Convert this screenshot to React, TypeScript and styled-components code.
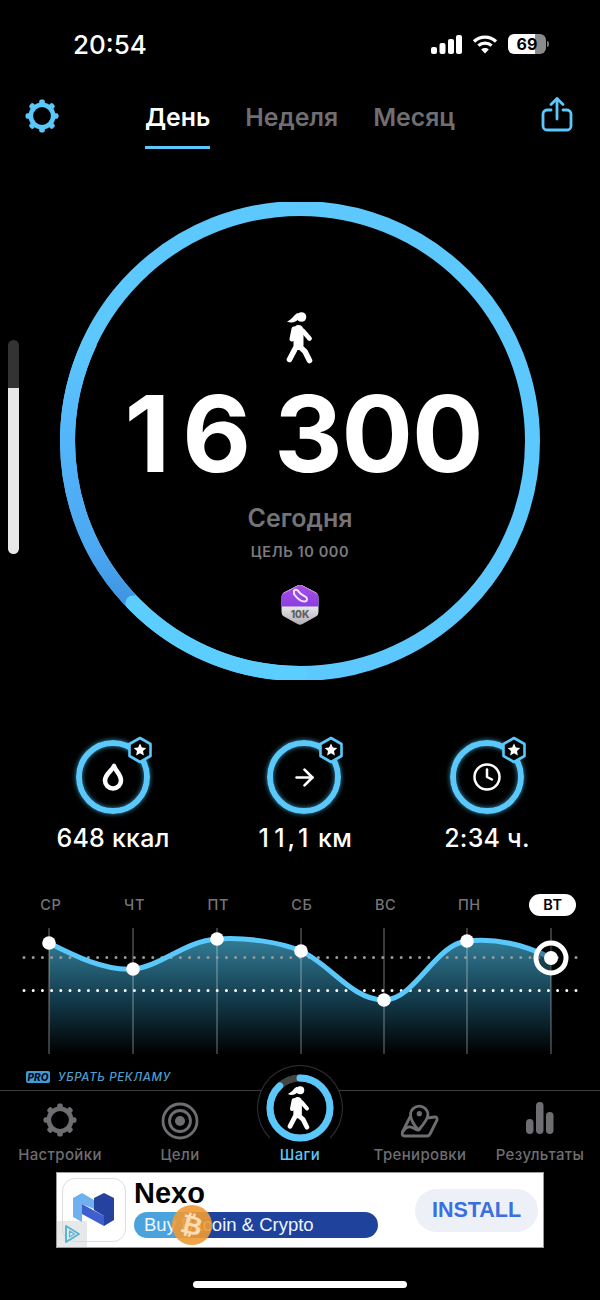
import React from "react";
import styled, { createGlobalStyle } from "styled-components";
import { ArrowRight, Clock } from "lucide-react";

const Global = createGlobalStyle`
  html, body { margin: 0; padding: 0; background: #000; }
  * { box-sizing: border-box; }
`;

const BLUE = "#5ac8fa";
const RING = "#5cc8fe";

const Page = styled.div`
  position: relative;
  width: 600px;
  height: 1300px;
  background: #000;
  overflow: hidden;
  display: flex;
  flex-direction: column;
  font-family: Inter, "Liberation Sans", sans-serif;
  color: #fff;
`;

const StatusBar = styled.div`
  height: 88px;
  padding: 0 51px 0 73px;
  display: flex;
  align-items: center;
  justify-content: space-between;
`;
const Time = styled.span`
  font-size: 26px;
  font-weight: 500;
`;
const StatusIcons = styled.div`
  display: flex;
  align-items: center;
  gap: 10px;
`;
const Battery = styled.div`
  width: 38px;
  height: 20px;
  border-radius: 6px;
  overflow: hidden;
  background: linear-gradient(90deg, #fff 0 72%, #8a8a8a 72% 100%);
  color: #000;
  font-size: 16px;
  font-weight: 700;
  line-height: 20px;
  text-align: center;
`;
const BatteryGroup = styled.div`
  display: flex;
  align-items: center;
  gap: 1px;
`;
const BatteryNub = styled.div`
  width: 2px;
  height: 6px;
  border-radius: 0 2px 2px 0;
  background: #777;
`;

const NavBar = styled.div`
  height: 62px;
  padding: 0 27px 0 24px;
  display: flex;
  align-items: flex-start;
  justify-content: space-between;
`;
const NavIcon = styled.div<{ $top: number }>`
  margin-top: ${(p) => p.$top}px;
  display: flex;
`;
const Tabs = styled.div`
  display: flex;
  gap: 35px;
  margin-left: -1px;
`;
const Tab = styled.div<{ $active?: boolean }>`
  height: 48px;
  margin-top: 13px;
  font-size: 24.8px;
  line-height: 32px;
  font-weight: 600;
  color: ${(p) => (p.$active ? "#fff" : "#6f6f72")};
  border-bottom: 3px solid ${(p) => (p.$active ? BLUE : "transparent")};
`;

const RingSection = styled.div`
  position: relative;
  align-self: center;
  width: 480px;
  height: 478px;
  margin-top: 52px;
  padding-top: 110px;
  display: flex;
  flex-direction: column;
  align-items: center;
`;
const RingArt = styled.svg`
  position: absolute;
  inset: 0;
`;
const Steps = styled.div`
  margin-top: 6px;
  padding-left: 7px;
  font-size: 106px;
  line-height: 128px;
  font-weight: 700;
  letter-spacing: -1px;
  white-space: nowrap;
`;
const BigOne = styled.span`
  margin-right: 13px;
`;
const Today = styled.div`
  margin-top: 5px;
  font-size: 25px;
  line-height: 30px;
  font-weight: 600;
  color: #747478;
`;
const Goal = styled.div`
  margin-top: 10px;
  font-size: 14.5px;
  line-height: 18px;
  font-weight: 600;
  letter-spacing: 0.6px;
  color: #7b7b7f;
`;
const BadgeWrap = styled.div`
  margin-top: 23px;
  height: 42px;
`;

const Stats = styled.div`
  margin-top: 60px;
  padding-left: 18px;
  display: grid;
  grid-template-columns: 190px 192px 174px;
`;
const Stat = styled.div`
  display: flex;
  flex-direction: column;
  align-items: center;
`;
const StatRing = styled.div`
  position: relative;
  width: 74px;
  height: 74px;
  border: 6px solid ${BLUE};
  border-radius: 50%;
  box-shadow: 0 0 5px rgba(90, 200, 250, 0.7), inset 0 0 5px rgba(90, 200, 250, 0.7);
  display: flex;
  align-items: center;
  justify-content: center;
`;
const StarBadge = styled.svg`
  position: absolute;
  top: -10px;
  right: -9px;
`;
const StatLabel = styled.div`
  margin-top: 9px;
  font-size: 25px;
  line-height: 30px;
  font-weight: 500;
  letter-spacing: 0.25px;
  white-space: nowrap;
`;
const One = styled.span`
  padding: 0 2.6px;
`;

const Days = styled.div`
  margin-top: 41px;
  padding-left: 9px;
  display: grid;
  grid-template-columns: repeat(7, 83.7px);
  justify-items: center;
`;
const Day = styled.div<{ $active?: boolean }>`
  min-width: ${(p) => (p.$active ? "47px" : "0")};
  height: 22px;
  border-radius: 11px;
  font-size: 14.5px;
  line-height: 22px;
  font-weight: ${(p) => (p.$active ? 600 : 500)};
  letter-spacing: 0.6px;
  text-align: center;
  color: ${(p) => (p.$active ? "#000" : "#76767a")};
  background: ${(p) => (p.$active ? "#fff" : "transparent")};
`;
const Chart = styled.svg`
  display: block;
  margin-top: 9px;
`;

const ProRow = styled.div`
  margin-top: 10px;
  height: 14px;
  padding-left: 26px;
  display: flex;
  align-items: center;
  gap: 8px;
`;
const ProTag = styled.span`
  width: 24px;
  height: 12px;
  border-radius: 2px;
  background: #3f9bd8;
  color: #0a0a14;
  font-size: 10px;
  line-height: 12px;
  font-weight: 800;
  font-style: italic;
  text-align: center;
`;
const ProText = styled.span`
  font-size: 11.5px;
  font-weight: 500;
  font-style: italic;
  letter-spacing: 0.65px;
  color: #4f9fce;
`;

const TabBar = styled.div`
  position: relative;
  margin-top: 6px;
  height: 82px;
  border-top: 1px solid #3d3d3f;
  display: grid;
  grid-template-columns: repeat(5, 120px);
`;
const TabItem = styled.div<{ $active?: boolean }>`
  position: relative;
  z-index: ${(p) => (p.$active ? 1 : 0)};
  height: 81px;
  padding: 11px 0 7px;
  display: flex;
  flex-direction: column;
  align-items: center;
  justify-content: space-between;
  font-size: 15px;
  line-height: 20px;
  font-weight: 500;
  letter-spacing: 0.35px;
  white-space: nowrap;
  color: ${(p) => (p.$active ? BLUE : "#6e6e72")};
`;
const CenterBubble = styled.div`
  position: absolute;
  left: 257px;
  top: -26px;
  width: 86px;
  height: 86px;
  border-radius: 50%;
  background: #000;
  border: 1px solid #333;
  border-bottom-color: transparent;
  display: flex;
  align-items: center;
  justify-content: center;
`;

const Ad = styled.div`
  margin: 0 56px;
  height: 76px;
  padding: 5px;
  background: #fff;
  border: 1px solid #9a9a9a;
  position: relative;
  display: flex;
  align-items: center;
  color: #000;
`;
const AdIcon = styled.div`
  width: 64px;
  height: 64px;
  border: 1px solid #dedede;
  border-radius: 13px;
  display: flex;
  align-items: center;
  justify-content: center;
  flex: none;
`;
const AdCopy = styled.div`
  margin-left: 8px;
  width: 244px;
  display: flex;
  flex-direction: column;
`;
const AdTitle = styled.div`
  font-family: "Liberation Sans", sans-serif;
  font-size: 29px;
  line-height: 30px;
  font-weight: 700;
  margin-top: -5px;
`;
const AdPill = styled.div`
  position: relative;
  margin-top: 4px;
  height: 26px;
  border-radius: 13px;
  padding-left: 10px;
  background: linear-gradient(90deg, #4ba3de 0 22%, #1f429c 22% 100%);
  color: #eef6ff;
  font-family: "Liberation Sans", sans-serif;
  font-size: 18.5px;
  line-height: 26px;
  white-space: nowrap;
`;
const CoinBadge = styled.div`
  position: absolute;
  left: 38px;
  top: -7px;
  width: 40px;
  height: 40px;
  border-radius: 50%;
  background: rgba(240, 154, 51, 0.9);
  color: #fbdcb4;
  font-size: 26px;
  line-height: 40px;
  font-weight: 700;
  text-align: center;
  font-family: "DejaVu Sans", sans-serif;
`;
const CoinGlyph = styled.span`
  display: inline-block;
  transform: rotate(14deg);
`;
const InstallButton = styled.div`
  margin-left: auto;
  width: 123px;
  height: 43px;
  border-radius: 22px;
  background: #eef0f8;
  color: #3a6fe0;
  font-family: "Liberation Sans", sans-serif;
  font-size: 21.5px;
  line-height: 43px;
  font-weight: 700;
  text-align: center;
`;
const AdChoice = styled.div`
  position: absolute;
  left: 0;
  bottom: 0;
  width: 30px;
  height: 26px;
  background: rgba(200, 205, 208, 0.45);
  display: flex;
  align-items: center;
  justify-content: center;
`;

const HomeIndicator = styled.div`
  align-self: center;
  margin-top: 33px;
  width: 214px;
  height: 7px;
  border-radius: 4px;
  background: #fff;
`;

const Scroller = styled.div`
  position: absolute;
  left: 8px;
  top: 340px;
  width: 11px;
  height: 214px;
  border-radius: 6px;
  overflow: hidden;
  background: linear-gradient(180deg, #333 0 48px, #e8e8e8 48px 100%);
`;

const Gear = ({ size, color }: { size: number; color: string }) => (
  <svg width={size} height={size} viewBox="0 0 36 36">
    <circle cx="18" cy="18" r="11.2" fill="none" stroke={color} strokeWidth="4.6" />
    {[0, 45, 90, 135, 180, 225, 270, 315].map((a) => (
      <rect key={a} x="15.2" y="1.5" width="5.6" height="6" rx="2" fill={color} transform={`rotate(${a} 18 18)`} />
    ))}
  </svg>
);

const WalkerShape = ({ color }: { color: string }) => (
  <>
    <circle cx="15.5" cy="5" r="4.8" fill={color} />
    <path d="M12 1C8 2 7 7 1 9.5C5 11.5 10 10.5 12.5 7Z" fill={color} />
    <path d="M12.5 18V33" stroke={color} strokeWidth="10" strokeLinecap="round" />
    <path d="M8 17L6 27" stroke={color} strokeWidth="5" strokeLinecap="round" />
    <path d="M17 19L23.5 26.5" stroke={color} strokeWidth="4.8" strokeLinecap="round" />
    <path d="M9.5 36L3.5 47.5" stroke={color} strokeWidth="5.6" strokeLinecap="round" />
    <path d="M13 34L19 39.5L23.5 48.5" stroke={color} strokeWidth="5.6" strokeLinecap="round" strokeLinejoin="round" />
  </>
);

const Star = () => (
  <StarBadge width="26" height="28" viewBox="0 0 26 28">
    <path d="M13 2L23.5 8V20L13 26L2.5 20V8Z" fill="#000" stroke={BLUE} strokeWidth="2.6" strokeLinejoin="round" />
    <path d="M13 7.5L14.9 11.6L19.3 12.1L16 15.1L16.9 19.5L13 17.3L9.1 19.5L10 15.1L6.7 12.1L11.1 11.6Z" fill="#fff" />
  </StarBadge>
);

const points: [number, number][] = [
  [49, 943],
  [133, 969],
  [217, 939],
  [301, 951],
  [384, 1000],
  [467, 941],
];
const curve =
  "M49 943C75 956 105 971 133 969C160 967 185 941 217 939C245 937 280 942 301 951C330 964 352 1000 384 1000C415 1000 435 944 467 941C495 938 525 945 551 958";

const days = ["СР", "ЧТ", "ПТ", "СБ", "ВС", "ПН"];

export default function App() {
  return (
    <Page>
      <Global />
      <StatusBar>
        <Time>20:54</Time>
        <StatusIcons>
          <svg width="31" height="20" viewBox="0 0 31 20" fill="#fff">
            <rect x="0" y="13" width="6" height="7" rx="2" />
            <rect x="8.5" y="9" width="6" height="11" rx="2" />
            <rect x="17" y="5" width="6" height="15" rx="2" />
            <rect x="25" y="1" width="6" height="19" rx="2" />
          </svg>
          <svg width="26" height="20" viewBox="0 0 26 20" fill="none" stroke="#fff" strokeWidth="3.2">
            <path d="M2 7.5C8 1.6 18 1.6 24 7.5" />
            <path d="M6.4 11.6C10 8.2 16 8.2 19.6 11.6" />
            <path d="M13 19.5L9.2 15.4C11.4 13.6 14.6 13.6 16.8 15.4Z" fill="#fff" stroke="none" />
          </svg>
          <BatteryGroup>
            <Battery>69</Battery>
            <BatteryNub />
          </BatteryGroup>
        </StatusIcons>
      </StatusBar>

      <NavBar>
        <NavIcon $top={10}>
          <Gear size={36} color={BLUE} />
        </NavIcon>
        <Tabs>
          <Tab $active>День</Tab>
          <Tab>Неделя</Tab>
          <Tab>Месяц</Tab>
        </Tabs>
        <NavIcon $top={8}>
          <svg width="32" height="36" viewBox="0 0 32 36" fill="none" stroke={BLUE} strokeWidth="2.8" strokeLinecap="round" strokeLinejoin="round">
            <path d="M10 14H6A4 4 0 0 0 2 18V30A4 4 0 0 0 6 34H26A4 4 0 0 0 30 30V18A4 4 0 0 0 26 14H22" />
            <path d="M16 23V3" />
            <path d="M10 8.5L16 2.5L22 8.5" />
          </svg>
        </NavIcon>
      </NavBar>

      <Scroller />

      <RingSection>
        <RingArt width="480" height="478" viewBox="0 0 480 478" fill="none">
          <defs>
            <linearGradient id="ringShade" x1="0" y1="0" x2="0" y2="1">
              <stop offset="0" stopColor={RING} />
              <stop offset="0.35" stopColor="#54b6fb" />
              <stop offset="0.8" stopColor="#4ba8f2" />
              <stop offset="1" stopColor="#3f95e2" />
            </linearGradient>
          </defs>
          <circle cx="240" cy="239" r="232.5" stroke={RING} strokeWidth="15" />
          <path d="M30 140A232.5 232.5 0 0 0 70 398" stroke="url(#ringShade)" strokeWidth="15" />
          <path d="M240 471.5A232.5 232.5 0 0 1 73 401" stroke="#5ccdff" strokeWidth="15" strokeLinecap="round" />
        </RingArt>
        <svg width="28" height="52" viewBox="0 0 28 52" fill="none">
          <WalkerShape color="#fff" />
        </svg>
        <Steps>
          <BigOne>1</BigOne>6 300
        </Steps>
        <Today>Сегодня</Today>
        <Goal>ЦЕЛЬ 10 000</Goal>
        <BadgeWrap>
          <svg width="38" height="42" viewBox="0 0 38 42">
            <defs>
              <clipPath id="hex">
                <path d="M16.5 1.6Q19 0.4 21.5 1.6L35 8.5Q37.5 10 37.5 13V28Q37.5 31 35 32.5L21.5 40Q19 41.5 16.5 40L3 32.5Q0.5 31 0.5 28V13Q0.5 10 3 8.5Z" />
              </clipPath>
              <linearGradient id="silver" x1="0" y1="0" x2="0" y2="1">
                <stop offset="0.5" stopColor="#ececf0" />
                <stop offset="1" stopColor="#a9a9ae" />
              </linearGradient>
              <linearGradient id="violet" x1="0" y1="0" x2="0" y2="1">
                <stop offset="0" stopColor="#a94fe6" />
                <stop offset="1" stopColor="#8a3fe0" />
              </linearGradient>
            </defs>
            <g clipPath="url(#hex)">
              <rect width="38" height="42" fill="url(#silver)" />
              <rect width="38" height="22.5" fill="url(#violet)" />
              <path d="M19 0L38 10" stroke="#fff" strokeOpacity="0.5" strokeWidth="1.5" />
              <path d="M19 0L0 10" stroke="#fff" strokeOpacity="0.5" strokeWidth="1.5" />
            </g>
            <path d="M13 6.5C15 5 17 6 18 8C19 10 22 11 25 13C27 15 26 18 23 17.5C19 17 15 13 13 10Z" fill="none" stroke="#f2e6ff" strokeWidth="2" />
            <text x="19" y="34" textAnchor="middle" fontSize="10" fontWeight="800" fill="#5f5f63" fontFamily="Inter, sans-serif">10K</text>
          </svg>
        </BadgeWrap>
      </RingSection>

      <Stats>
        <Stat>
          <StatRing>
            <svg width="22" height="28" viewBox="0 0 22 28" fill="none">
              <path d="M12 3C13 7.5 19 11 19 17.5A8 8 0 0 1 3 17.5C3 11 10 8 12 3Z" stroke="#fff" strokeWidth="4.6" strokeLinejoin="round" />
            </svg>
            <Star />
          </StatRing>
          <StatLabel>648 ккал</StatLabel>
        </Stat>
        <Stat>
          <StatRing>
            <ArrowRight size={27} color="#fff" strokeWidth={2.4} />
            <Star />
          </StatRing>
          <StatLabel>
            <One>1</One>
            <One>1</One>,<One>1</One> км
          </StatLabel>
        </Stat>
        <Stat>
          <StatRing>
            <Clock size={30} color="#fff" strokeWidth={2} />
            <Star />
          </StatRing>
          <StatLabel>2:34 ч.</StatLabel>
        </Stat>
      </Stats>

      <Days>
        {days.map((d) => (
          <Day key={d}>{d}</Day>
        ))}
        <Day $active>ВТ</Day>
      </Days>

      <Chart width="600" height="135" viewBox="0 925 600 135" fill="none">
        <defs>
          <linearGradient id="area" x1="0" y1="939" x2="0" y2="1054" gradientUnits="userSpaceOnUse">
            <stop offset="0" stopColor="#327c96" />
            <stop offset="0.55" stopColor="#123848" />
            <stop offset="1" stopColor="#000" />
          </linearGradient>
        </defs>
        <path d={`${curve}V1054H49Z`} fill="url(#area)" />
        {[49, 133, 217, 301, 384, 467, 551].map((x) => (
          <path key={x} d={`M${x} 928V1054`} stroke="#fff" strokeOpacity="0.3" strokeWidth="1.5" />
        ))}
        <path d="M24 957.5H577" stroke="#9a9a9a" strokeWidth="3" strokeLinecap="round" strokeDasharray="0 9.2" />
        <path d="M24 990.5H577" stroke="#fff" strokeWidth="3" strokeLinecap="round" strokeDasharray="0 9.2" />
        <path d={curve} stroke={BLUE} strokeWidth="5" strokeLinecap="round" />
        {points.map(([x, y]) => (
          <circle key={x} cx={x} cy={y} r="6.8" fill="#fff" />
        ))}
        <circle cx="551" cy="958" r="15" fill="#000" fillOpacity="0.35" stroke="#fff" strokeWidth="5" />
        <circle cx="551" cy="958" r="7" fill="#fff" />
      </Chart>

      <ProRow>
        <ProTag>PRO</ProTag>
        <ProText>УБРАТЬ РЕКЛАМУ</ProText>
      </ProRow>

      <TabBar>
        <TabItem>
          <Gear size={36} color="#6e6e72" />
          Настройки
        </TabItem>
        <TabItem>
          <svg width="38" height="38" viewBox="0 0 38 38" fill="none" stroke="#6e6e72" strokeWidth="2.8">
            <circle cx="19" cy="19" r="17" />
            <circle cx="19" cy="19" r="10.5" />
            <circle cx="19" cy="19" r="5" fill="#6e6e72" stroke="none" />
          </svg>
          Цели
        </TabItem>
        <TabItem $active>
          <span />
          Шаги
        </TabItem>
        <TabItem>
          <svg width="40" height="36" viewBox="0 0 40 36" fill="none" stroke="#6e6e72" strokeWidth="2.8" strokeLinejoin="round" strokeLinecap="round">
            <path d="M10 15L2.5 30Q1.5 34 4.5 34H27Q29 34 30 32L37 18Q37.5 15 35 15L27 16" />
            <path d="M2.5 30C10 19 15 29 18.5 28C22 27 19.5 24 13 21" />
            <path d="M18.5 28C12 21 10.5 16 10.5 12A8.8 8.8 0 0 1 28 12C28 16 25 21 18.5 28Z" fill="#000" />
            <circle cx="19.3" cy="11.7" r="2.6" fill="#6e6e72" stroke="none" />
          </svg>
          Тренировки
        </TabItem>
        <TabItem>
          <svg width="30" height="32" viewBox="0 0 30 32" fill="#6e6e72">
            <rect x="1" y="17" width="7.5" height="15" rx="3.7" />
            <rect x="11" y="0" width="7.5" height="32" rx="3.7" />
            <rect x="21" y="10" width="7.5" height="22" rx="3.7" />
          </svg>
          Результаты
        </TabItem>
        <CenterBubble>
          <svg width="68" height="68" viewBox="0 0 68 68" fill="none">
            <circle cx="34" cy="34" r="30" stroke="#444" strokeWidth="7" />
            <circle
              cx="34"
              cy="34"
              r="30"
              stroke={BLUE}
              strokeWidth="7"
              strokeLinecap="round"
              strokeDasharray="166 188.5"
              transform="rotate(-90 34 34)"
            />
            <g transform="translate(21 12) scale(0.85)">
              <WalkerShape color="#fff" />
            </g>
          </svg>
        </CenterBubble>
      </TabBar>

      <Ad>
        <AdIcon>
          <svg width="42" height="36" viewBox="0 0 42 36">
            <path d="M0 6L9 1L21 8V17L9 12V30L0 25Z" fill="#6fb1ee" />
            <path d="M9 12L31 24V34L9 22Z" fill="#3f5fd0" />
            <path d="M21 6L31 1L41 6V28L31 34V24L21 18Z" fill="#26429f" />
          </svg>
        </AdIcon>
        <AdCopy>
          <AdTitle>Nexo</AdTitle>
          <AdPill>
            Buy Bitcoin &amp; Crypto
            <CoinBadge>
              <CoinGlyph>₿</CoinGlyph>
            </CoinBadge>
          </AdPill>
        </AdCopy>
        <InstallButton>INSTALL</InstallButton>
        <AdChoice>
          <svg width="20" height="20" viewBox="0 0 20 20" fill="none" stroke="#58b5d4" strokeWidth="2" strokeLinejoin="round">
            <path d="M4 2V18L17 10Z" />
            <path d="M7.5 7V13L12.5 10Z" strokeWidth="1.2" />
          </svg>
        </AdChoice>
      </Ad>

      <HomeIndicator />
    </Page>
  );
}
